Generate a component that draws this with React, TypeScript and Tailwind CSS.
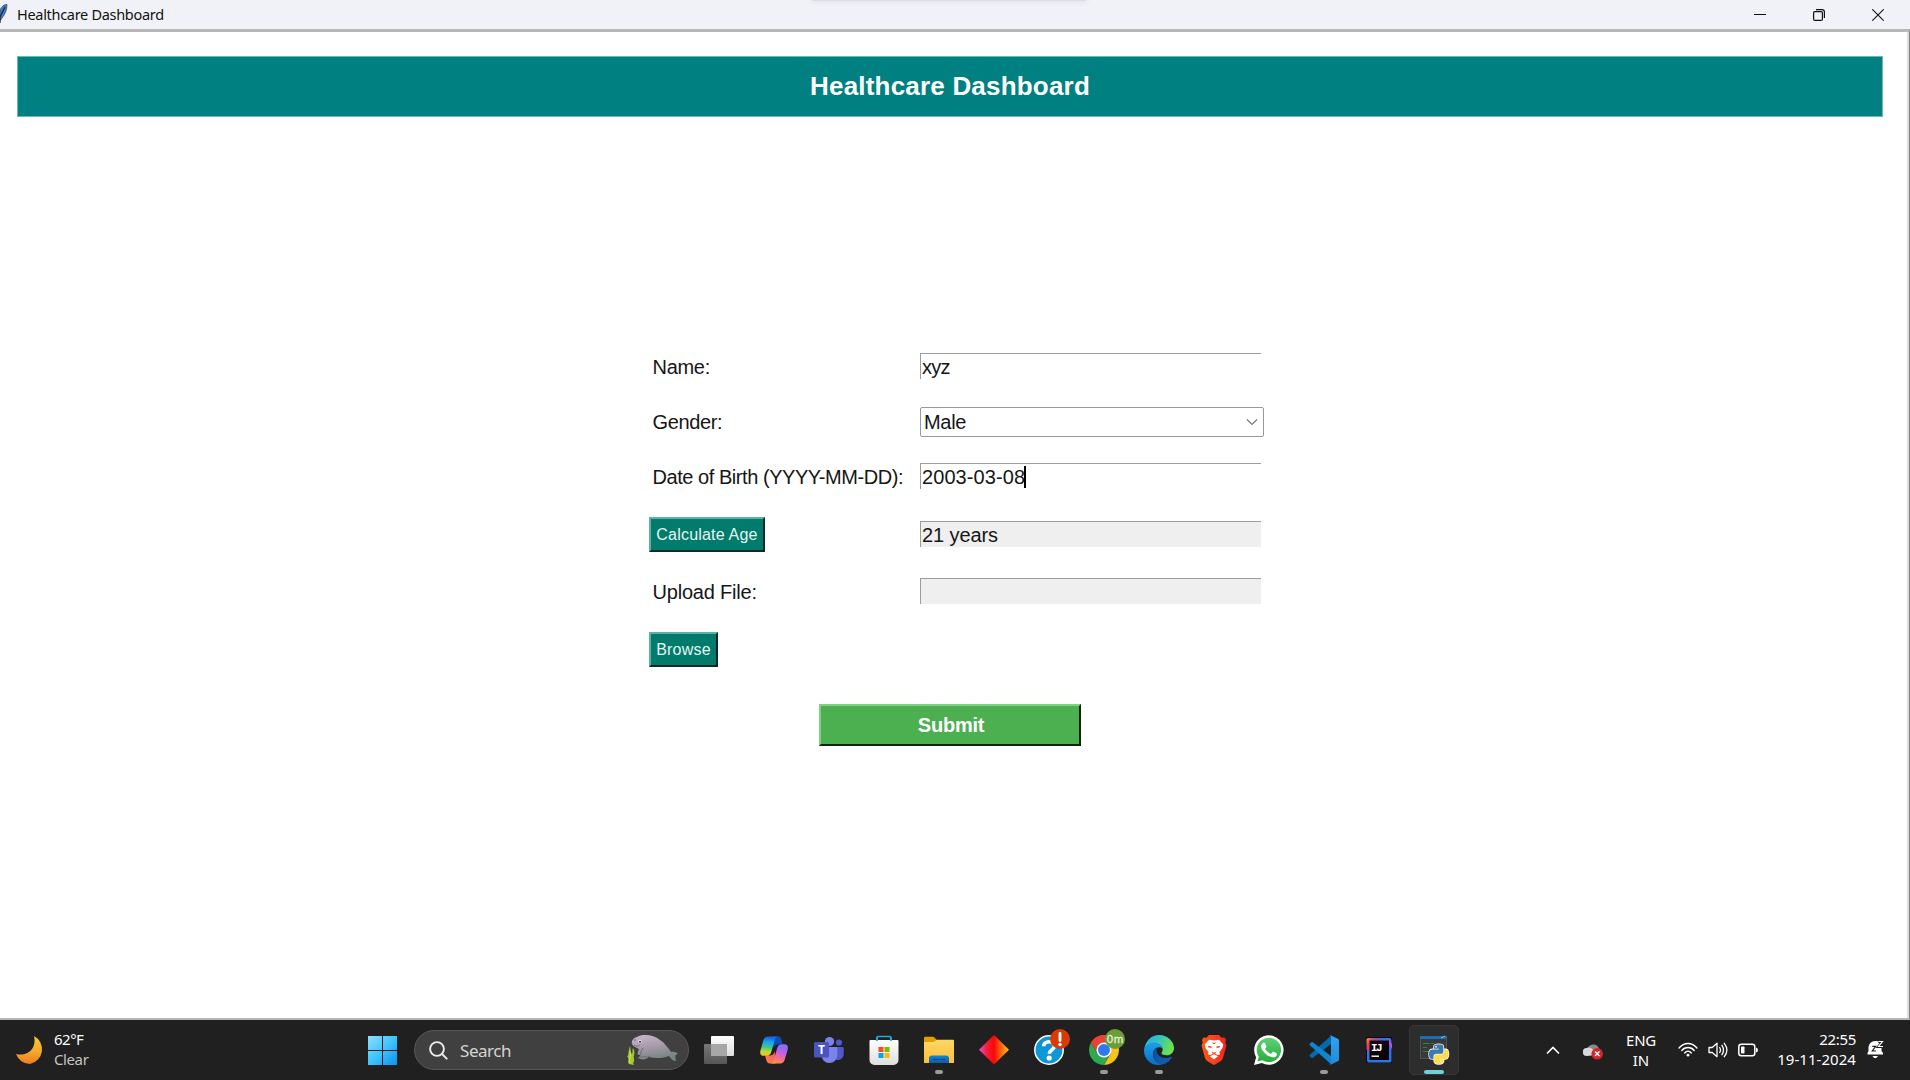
import type { ReactNode } from "react";

const PY_BLUE =
  "M167.8 248.1h106.8c29.7 0 53.4-24.5 53.4-54.3V91.9c0-29-24.4-50.7-53.4-55.6-35.8-5.9-74.7-5.6-106.8.1-45.2 8-53.4 24.7-53.4 55.6v40.7h106.9v13.6h-147c-31.1 0-58.3 18.7-66.8 54.2-9.8 40.7-10.2 66.1 0 108.6 7.6 31.6 25.7 54.2 56.8 54.2H101v-48.8c0-35.3 30.5-66.4 66.8-66.4zm-6.7-142.6c-11.1 0-20.1-9.1-20.1-20.3.1-11.3 9-20.4 20.1-20.4 11 0 20.1 9.2 20.1 20.4s-9 20.3-20.1 20.3z";
const PY_YELLOW =
  "M439.8 200.5c-7.7-30.9-22.3-54.2-53.4-54.2h-40.1v47.4c0 36.8-31.2 67.8-66.8 67.8H172.7c-29.2 0-53.4 25-53.4 54.3v101.8c0 29 25.2 46 53.4 54.3 33.8 9.9 66.3 11.7 106.8 0 26.9-7.8 53.4-23.5 53.4-54.3v-40.7H226.2v-13.6h160.2c31.1 0 42.6-21.7 53.4-54.2 11.2-33.5 10.7-65.7 0-108.6zM286.2 404c11.1 0 20.1 9.1 20.1 20.3 0 11.3-9 20.4-20.1 20.4-11 0-20.1-9.2-20.1-20.4.1-11.3 9.1-20.3 20.1-20.3z";
const PHONE =
  "M325.1 300.5c-5.5-2.8-32.8-16.2-37.9-18-5.1-1.9-8.8-2.8-12.5 2.8-3.7 5.6-14.3 18-17.6 21.8-3.2 3.7-6.5 4.2-12 1.4-32.6-16.3-54-29.1-75.5-66-5.7-9.8 5.7-9.1 16.3-30.3 1.8-3.7.9-6.9-.5-9.7-1.4-2.8-12.5-30.1-17.1-41.2-4.5-10.8-9.1-9.3-12.5-9.5-3.2-.2-6.9-.2-10.6-.2-3.7 0-9.7 1.4-14.8 6.9-5.1 5.6-19.4 19-19.4 46.3 0 27.3 19.9 53.7 22.6 57.4 2.8 3.7 39.1 59.7 94.8 83.8 35.2 15.2 49 16.5 66.6 13.9 10.7-1.6 32.8-13.4 37.4-26.4 4.6-13 4.6-24.1 3.2-26.4-1.3-2.5-5-3.9-10.5-6.6z";

function Grad({ id, stops, x1 = 0, y1 = 0, x2 = 0, y2 = 1 }: { id: string; stops: string[]; x1?: number; y1?: number; x2?: number; y2?: number }) {
  return (
    <linearGradient id={id} x1={x1} y1={y1} x2={x2} y2={y2}>
      {stops.map((c, i) => (
        <stop key={i} offset={i / (stops.length - 1)} stopColor={c} />
      ))}
    </linearGradient>
  );
}

function Icon({ children }: { children: ReactNode }) {
  return (
    <svg viewBox="0 0 30 30" className="block h-[30px] w-[30px] overflow-visible">
      {children}
    </svg>
  );
}

function Slot({ children, running = false }: { children: ReactNode; running?: boolean }) {
  return (
    <div className="relative flex h-full w-[55px] shrink-0 items-center justify-center">
      {children}
      {running && <span className="absolute bottom-[6px] left-[24px] h-1 w-2 rounded-full bg-[#9b9b9b]" />}
    </div>
  );
}

function TaskView() {
  return (
    <Icon>
      <defs>
        <Grad id="tv1" stops={["#ffffff", "#dcdcdc"]} />
        <Grad id="tv2" stops={["#777777", "#565656"]} />
      </defs>
      <rect x="7" y="1" width="23" height="20" rx="1" fill="url(#tv1)" />
      <rect x="0" y="9" width="23" height="20" rx="1" fill="url(#tv2)" />
      <rect x="7" y="9" width="16" height="12" fill="#a7a7a7" />
    </Icon>
  );
}

function Copilot() {
  return (
    <Icon>
      <defs>
        <Grad id="cp1" stops={["#1b62e8", "#18a9e8", "#3ec58f", "#c2d83a", "#ffc400"]} x2={-0.1} />
        <Grad id="cp2" stops={["#8f6cf5", "#c95fe0", "#f26a9b", "#ff8a4c", "#ffb347"]} x2={-0.3} />
        <Grad id="cp3" stops={["#0a56c4", "#0d43a8"]} x2={1} />
        <Grad id="cp4" stops={["#f24e6c", "#ff8b3d"]} x1={1} x2={0} />
      </defs>
      <path d="M14 1.500H19C21.500 1.500 22 3 22.700 5.200L23.700 9.500H19C16.500 9.500 15.500 11 15 13L12 3Z" fill="url(#cp3)" />
      <path d="M16 28.500H11C8.800 28.500 8 27 7.300 25L6 20.500H10.500C13.500 20.500 14.500 18.500 15.300 16L18 27Z" fill="url(#cp4)" />
      <path d="M8.500 1.500H18.500C16.500 2 16 4 15.300 6.500L12.300 17C11.500 20 9.500 20.800 7.500 20.800H5C1.500 20.800.5 18.500 1.600 15L4.500 5C5.200 2.700 6.500 1.500 8.500 1.500Z" fill="url(#cp1)" />
      <path d="M21.500 28.500H12C14 28 14.700 26 15.300 23.500L18.200 13C19 10.200 20.700 9.200 23 9.200H25.300C28.500 9.200 29.500 11.500 28.600 15L25.600 25C24.900 27.300 23.500 28.500 21.500 28.500Z" fill="url(#cp2)" />
      <path d="M16.300 10.500H18.700L14 19.500H12.500Z" fill="#202024" />
    </Icon>
  );
}

function Teams() {
  return (
    <Icon>
      <circle cx="15.500" cy="6.500" r="4.600" fill="#7b83eb" />
      <circle cx="25" cy="7.500" r="3.100" fill="#5059c9" />
      <path d="M19 12H28.500a1.200 1.200 0 0 1 1.200 1.200V19a6 6 0 0 1-10 4.500Z" fill="#5059c9" />
      <path d="M8 12H22a1.400 1.400 0 0 1 1.400 1.400V20a8 8 0 0 1-16 0Z" fill="#7b83eb" />
      <rect x="0" y="7" width="15" height="15.500" rx="1.500" fill="#4b53bc" />
      <text x="7.500" y="18.800" textAnchor="middle" fontSize="12" fontWeight="700" fill="#fff" fontFamily="Open Sans, sans-serif">T</text>
    </Icon>
  );
}

function Store() {
  return (
    <Icon>
      <defs><Grad id="st" stops={["#ffffff", "#dedede"]} /></defs>
      <path d="M8 7V2.300a.8.8 0 0 1 .8-.8H21a.8.8 0 0 1 .8.800V7" fill="none" stroke="#22a9e0" strokeWidth="1.700" />
      <path d="M.5 6A1 1 0 0 1 1.500 5H28.500A1 1 0 0 1 29.500 6V25A5 5 0 0 1 24.500 30H5.500A5 5 0 0 1 .5 25Z" fill="url(#st)" />
      <path d="M8 6V2.500M22 6V2.500" stroke="#22a9e0" strokeWidth="1.700" />
      <rect x="9.500" y="12" width="5" height="5" fill="#f25022" />
      <rect x="15.500" y="12" width="5" height="5" fill="#7fba00" />
      <rect x="9.500" y="18" width="5" height="5" fill="#00a4ef" />
      <rect x="15.500" y="18" width="5" height="5" fill="#ffb900" />
    </Icon>
  );
}

function Folder() {
  return (
    <Icon>
      <defs>
        <Grad id="fo1" stops={["#ffd768", "#fcc034"]} />
        <Grad id="fo2" stops={["#1285d8", "#0d5ca8"]} />
      </defs>
      <path d="M0 3A1.200 1.200 0 0 1 1.200 1.800H9.500L13 5V12H0Z" fill="#dfa000" />
      <path d="M0 7H9.500L13 4.800H29A1 1 0 0 1 30 5.800V28H0Z" fill="url(#fo1)" />
      <path d="M5 28V23.500A3 3 0 0 1 8 20.500H22A3 3 0 0 1 25 23.500V28Z" fill="url(#fo2)" />
      <path d="M9 24.500H21" stroke="#0a4a8a" strokeWidth="1.200" />
    </Icon>
  );
}

function Diamond() {
  return (
    <Icon>
      <defs><Grad id="di" stops={["#e550d8", "#f5203e", "#f90606", "#ff6a10", "#ffc400"]} x2={1} y2={0} /></defs>
      <path d="M15 0L30 14.700L15 29.400L0 14.700Z" fill="url(#di)" />
    </Icon>
  );
}

function Help() {
  return (
    <Icon>
      <circle cx="15" cy="15" r="14.200" fill="#0d96d8" stroke="#fff" strokeWidth="1.500" />
      <path d="M9.700 11.200C9.700 8.300 12 6.700 15 6.700C18.300 6.700 20.400 8.500 20.400 11C20.400 14.500 15.300 14.800 15.300 18.700" fill="none" stroke="#fff" strokeWidth="3.600" />
      <circle cx="15.200" cy="23" r="2.600" fill="#fff" />
      <circle cx="26" cy="4" r="10" fill="#d83b05" />
      <path d="M26-1.500V5.500" stroke="#fff" strokeWidth="2.800" strokeLinecap="round" />
      <circle cx="26" cy="9.500" r="1.700" fill="#fff" />
    </Icon>
  );
}

function Chrome() {
  return (
    <Icon>
      <path d="M15 15L2.010 7.500A15 15 0 0 1 27.990 7.500Z" fill="#ea4335" />
      <path d="M15 7.500H27.990A15 15 0 0 1 15 30L21.500 18.750Z" fill="#fbc116" />
      <path d="M2.010 7.500A15 15 0 0 0 15 30L21.500 18.750H8.500Z" fill="#2da94f" />
      <path d="M2.010 7.500L8.500 18.750L9 12L15 7.500H27.990A15 15 0 0 0 2.010 7.500Z" fill="#ea4335" />
      <circle cx="15" cy="15" r="7.500" fill="#fff" />
      <circle cx="15" cy="15" r="6" fill="#2f78ee" />
      <circle cx="26" cy="4" r="10" fill="#6a9c38" />
      <text x="26" y="8" textAnchor="middle" fontSize="11.500" fill="#e4f0d8" stroke="#e4f0d8" strokeWidth=".3" fontFamily="Liberation Sans, sans-serif" textLength="16.500">0m</text>
    </Icon>
  );
}

function Edge() {
  return (
    <Icon>
      <defs>
        <Grad id="ed1" stops={["#2aa9e8", "#33c5c0", "#6ae24c"]} x2={1} y2={0.4} />
        <Grad id="ed2" stops={["#1ba1e8", "#0c6cc8"]} />
        <Grad id="ed3" stops={["#0d4f9e", "#1260b8"]} x2={1} />
      </defs>
      <path d="M.3 14.500C1 6 7.500 0 15.200 0C24 0 30 6.800 30 13C30 17.500 26.700 20.300 22.800 20.300C19.500 20.300 17.500 19.300 17.500 18C17.500 17.200 18.700 16.700 18.700 14.500C18.700 11.500 15.500 8.700 11 8.700C6 8.700 1.500 11 .3 14.500Z" fill="url(#ed1)" />
      <path d="M0 14.700C1 10.500 5 7.500 10 7.500C14 7.500 17.500 9.500 18.500 13C13.500 10.500 9 14 9 19C9 24.500 13 29 19 29.300C8.500 32.500 0 25 0 15.500Z" fill="url(#ed2)" />
      <path d="M12.800 12.500C9.500 14.500 8.300 19 10 23C12 28 17 30 20 29C24 27.500 26.500 25 27.900 22.500C28.200 21.900 27.600 21.600 27 21.900C20 25 12.500 21 12.500 15.500C12.500 14 12.500 13.300 12.800 12.500Z" fill="url(#ed3)" />
    </Icon>
  );
}

function Brave() {
  return (
    <svg viewBox="0 0 26 30" className="h-[30px] w-[26px]">
      <defs><Grad id="br" stops={["#ff5a12", "#f9431b", "#fb1f1f"]} x2={1} y2={0} /></defs>
      <path d="M8 0H18L20.500 2.700L23.500 2.500L25 5L24.300 7.500L25.500 10.500L22 23C21.500 24.700 20.500 25.500 19 26.500L14 29.600C13.300 30.100 12.700 30.100 12 29.600L7 26.500C5.500 25.500 4.500 24.700 4 23L.5 10.500L1.700 7.500L1 5L2.500 2.500L5.500 2.700Z" fill="url(#br)" />
      <path d="M8 4.800L13 5.600L18 4.800L22.300 9.500L21.500 13L18.500 17L19 19.500L16.500 20L13 18L9.500 20L7 19.500L7.500 17L4.500 13L3.700 9.500Z" fill="#fff" />
      <path d="M9 21.200L13 19.300L17 21.200L13 24.500Z" fill="#fff" />
      <path d="M6.500 10.700L10.800 11.600L10.300 13L7.500 12.500ZM19.500 10.700L15.200 11.600L15.700 13L18.500 12.500Z" fill="#fb4a1e" />
      <path d="M10.300 16.500L13 17.800L15.700 16.500L14.500 18.400L13 19L11.500 18.400Z" fill="#fb4a1e" />
      <path d="M11 7.300L13 8L15 7.300L13.900 9H12.100Z" fill="#fb4a1e" />
    </svg>
  );
}

function WhatsApp() {
  return (
    <Icon>
      <defs><Grad id="wa" stops={["#5fd275", "#27ad3d"]} /></defs>
      <path d="M0 30L2.100 22.300A14.700 14.700 0 1 1 7.800 27.900Z" fill="#fff" />
      <path d="M3.500 26.500L4.800 21.700A12.200 12.200 0 1 1 8.400 25.200Z" fill="url(#wa)" />
      <path d={PHONE} fill="#fff" transform="translate(-.7 -3) scale(.0703)" />
    </Icon>
  );
}

function Code() {
  return (
    <Icon>
      <defs><Grad id="vs" stops={["#2ba4f0", "#2489db"]} /></defs>
      <path d="M.6 20L19 3.500L22 .5V9L4.200 22.500A1.500 1.500 0 0 1 2.200 22.500L.7 21.200A.9.9 0 0 1 .6 20Z" fill="#0569b0" />
      <path d="M.6 10L19 26.500L22 29.500V21L4.200 7.500A1.500 1.500 0 0 0 2.200 7.500L.7 8.800A.9.9 0 0 0 .6 10Z" fill="#0d86cf" />
      <path d="M22 29.600C21.300 29.900 20.500 29.700 20 29.200C20.800 29.900 22 29.300 22 28.200V1.800C22 .7 20.800.1 20 .8C20.500.3 21.300.1 22 .4L28.900 3.700C29.600 4 30 4.700 30 5.400V24.600C30 25.300 29.600 26 28.900 26.300Z" fill="url(#vs)" />
    </Icon>
  );
}

function IntelliJ() {
  return (
    <Icon>
      <defs>
        <Grad id="ij" stops={["#f9a03a", "#f0405a", "#c23a9c", "#3d6fe8"]} x2={0.9} y2={0.6} />
        <Grad id="ij2" stops={["#16060f", "#050309"]} />
      </defs>
      <rect x="2" y="2" width="26" height="26" fill="#08060c" />
      <path d="M4 3H26.500L27.500 5V26.500L26 27.500H4L3 26V4Z" fill="#2779ea" />
      <path d="M2.500 4L4 3L12 4L17 3L14 8L7 17L2.500 15Z" fill="url(#ij)" />
      <path d="M25 4L28 9V14L25 10Z" fill="#c04bd8" />
      <rect x="5.500" y="5.500" width="19.500" height="19.500" fill="url(#ij2)" />
      <text x="7" y="15.500" fontSize="11" fontWeight="700" fill="#fff" fontFamily="Liberation Mono, monospace" textLength="11.500">IJ</text>
      <rect x="7.500" y="20.500" width="7.500" height="1.400" fill="#fff" />
    </Icon>
  );
}

function PythonWindow() {
  return (
    <Icon>
      <rect x="1.500" y="1.500" width="26" height="22" fill="#38393a" stroke="#505254" />
      <rect x="1" y="1" width="27" height="3" fill="#1a6fae" />
      <path d="M22 3L26 1" stroke="#8cc4ea" />
      <path d="M4 8.500H10.500M12 8.500H15M4 12.500H8M4 16.500H10" stroke="#3d7d3b" strokeWidth="1.200" />
      <g transform="translate(10 8) scale(.0437)" stroke="#f3f3f3" strokeWidth="36">
        <path d={PY_BLUE} fill="#3d79aa" />
        <path d={PY_YELLOW} fill="#ffdc4e" />
      </g>
      <g transform="translate(10 8) scale(.0437)">
        <path d={PY_BLUE} fill="#3d79aa" />
        <path d={PY_YELLOW} fill="#ffdc4e" />
      </g>
    </Icon>
  );
}

function Manatee() {
  return (
    <svg viewBox="0 0 54 32" className="h-8 w-[54px] shrink-0">
      <defs>
        <Grad id="mn" stops={["#c9b8cc", "#a99bab", "#758581"]} x2={0.3} />
      </defs>
      <path d="M4 30C2 27 5 26 2 22C4 23 3 17 5 12C6 16 5 18 7 20C8 18 7 16 8 14C11 19 8 22 9 25C10 28 7 28 9 31Z" fill="#a5c92f" />
      <path d="M5 29C4 26 6 23 5 17" stroke="#d8e85c" strokeWidth="1" fill="none" />
      <path d="M7 10C6 7 8 4 12 3C18-.5 29 1 35 6C40 9 43 14 46 18C50 17 52 19 53 20C50 20 50 23 51 27C48 27 46 25 44 22C39 24 31 25 24 23C21 26 16 26 13 24C14 23 16 22 15 21C12 21 12 18 14 16C13 13 9 14 7 10Z" fill="url(#mn)" />
      <path d="M18 14C16 17 15 19 16 21M25 22C22 24 18 22 15 23" stroke="#706876" strokeWidth="1" fill="none" />
      <circle cx="15" cy="7.500" r="1.700" fill="#f5eef5" />
      <circle cx="15" cy="7.800" r="1" fill="#2a2530" />
      <circle cx="10" cy="6" r=".7" fill="#4a3f4d" />
      <path d="M9 11C11 13 14 12 15 11" stroke="#706876" fill="none" strokeWidth=".8" />
    </svg>
  );
}

function TitleBar() {
  return (
    <header className="relative flex h-[29px] shrink-0 items-center bg-[#f1f2f8]">
      <div className="absolute left-[812px] top-0 h-px w-[274px] bg-[#dcdde2] shadow-[0_0_5px_1px_#dcdde4]" />
      <svg viewBox="0 0 8 24" className="h-6 w-2">
        <path d="M0 7C2 3 4 1.500 7 1.500C7 6 5.500 11 2 15L0 18Z" fill="#3f7cc9" stroke="#4a4f5c" strokeWidth=".8" />
        <path d="M0 20V14L5 4" stroke="#1d2430" fill="none" strokeWidth="1.200" />
      </svg>
      <span className="ml-[9px] font-['Noto_Sans'] text-[14.500px] leading-none tracking-[-0.300px] text-[#111]">Healthcare Dashboard</span>
      <div className="ml-auto mr-[26px] flex items-center gap-[46px]">
        <svg viewBox="0 0 12 12" className="mr-px h-3 w-3"><path d="M0 5.500H12" stroke="#111" /></svg>
        <svg viewBox="0 0 12 12" className="mr-px h-3 w-3" fill="none" stroke="#111">
          <path d="M3 .7H9A2.400 2.400 0 0 1 11.400 3V9" strokeWidth="1.200" />
          <rect x=".6" y="2.600" width="8.800" height="8.800" rx="1.200" strokeWidth="1.200" />
        </svg>
        <svg viewBox="0 0 12 12" className="h-3 w-3"><path d="M.3.3L11.700 11.700M11.700.3L.3 11.700" stroke="#111" strokeWidth="1.100" /></svg>
      </div>
    </header>
  );
}

const field = "flex h-[26px] w-[341px] items-center border-l border-t border-[#9d9d9d] pl-px leading-none";
const label = "w-[271px] whitespace-nowrap pl-[3.500px] pt-[2px]";

function Form() {
  return (
    <section className="ml-[649px] mt-[222px] flex w-[620px] flex-col font-['Liberation_Sans'] text-[20px] text-[#161616]">
      <div className="flex h-[54px] items-center">
        <span className={`${label} tracking-[-0.300px]`}>Name:</span>
        <div className={`${field} bg-white`}><span className="pt-px tracking-[-0.700px]">xyz</span></div>
      </div>
      <div className="flex h-[58px] items-center">
        <span className="w-[271px] pl-[3.500px] tracking-[-0.350px]">Gender:</span>
        <div className="flex h-[30px] w-[344px] items-center justify-between rounded-[2px] border border-[#999] pl-[3px] pr-[5px] leading-none">
          <span className="tracking-[-0.300px]">Male</span>
          <svg viewBox="0 0 12 8" className="h-2 w-3"><path d="M1 1.500L6 6.500L11 1.500" stroke="#777" strokeWidth="1.200" fill="none" /></svg>
        </div>
      </div>
      <div className="flex h-[50px] items-center">
        <span className={`${label} tracking-[-0.450px]`}>Date of Birth (YYYY-MM-DD):</span>
        <div className={`${field} bg-white`}>
          <span className="tracking-[0.080px]">2003-03-08</span>
          <span className="-ml-px h-[22px] w-[2px] bg-black" />
        </div>
      </div>
      <div className="flex h-[66px] items-center">
        <div className="w-[271px]">
          <button className="flex h-[35px] w-[116px] items-center justify-center whitespace-nowrap border-2 border-b-[#0b2a26] border-l-[#5db0a3] border-r-[#0b2a26] border-t-[#5db0a3] bg-[#007b6c] pt-[2px] text-[16px] leading-none tracking-[0.200px] text-[#e6f4f1]">Calculate Age</button>
        </div>
        <div className={`${field} bg-[#efefef]`}><span className="tracking-[-0.100px]">21 years</span></div>
      </div>
      <div className="flex h-[48px] items-center">
        <span className={`${label} tracking-[-0.200px]`}>Upload File:</span>
        <div className={`${field} bg-[#efefef]`} />
      </div>
      <div className="flex h-[69px] items-center">
        <button className="flex h-[35px] w-[69px] items-center justify-center border-2 border-b-[#0b2a26] border-l-[#5db0a3] border-r-[#0b2a26] border-t-[#5db0a3] bg-[#007b6c] pt-px text-[16px] leading-none tracking-[0.200px] text-[#e6f4f1]">Browse</button>
      </div>
      <button className="ml-[170px] mt-[20px] flex h-[42px] w-[262px] items-center justify-center border-2 border-b-[#12240f] border-l-[#7fd083] border-r-[#12240f] border-t-[#7fd083] bg-[#4caf50] pl-[2px] font-bold leading-none tracking-[-0.250px] text-white">Submit</button>
    </section>
  );
}

function Tray() {
  return (
    <div className="ml-auto flex h-full items-center text-[15px] text-white">
      <svg viewBox="0 0 14 9" className="mr-[23px] h-[9px] w-[14px]"><path d="M1 7.500L7 1.500L13 7.500" stroke="#fff" strokeWidth="1.600" fill="none" /></svg>
      <svg viewBox="0 0 20 18" className="mr-[23px] mt-px h-[18px] w-5">
        <path d="M4 8C5 2 14 0 16 7L17 12H5Z" fill="#8a8a8a" />
        <path d="M4 14A4 4 0 0 1 3.500 6C6 4.500 9 6 10 8L13 13Z" fill="#d8d8d8" />
        <circle cx="14.200" cy="11.800" r="5.800" fill="#d6252e" />
        <path d="M12 9.600L16.400 14M16.400 9.600L12 14" stroke="#fff" strokeWidth="1.400" />
      </svg>
      <div className="mr-[22px] flex w-[30px] flex-col items-center whitespace-nowrap leading-5">
        <span className="tracking-[-0.300px]">ENG</span><span>IN</span>
      </div>
      <svg viewBox="0 0 20 16" className="mr-[10px] h-4 w-5" fill="none" stroke="#fff" strokeWidth="1.400" strokeLinecap="round">
        <path d="M1 6C6 0 14 0 19 6M3.800 8.500C7 4.500 13 4.500 16.200 8.500M6.700 11C8.500 8.500 11.500 8.500 13.300 11" />
        <circle cx="10" cy="13.200" r="1.400" fill="#fff" stroke="none" />
      </svg>
      <svg viewBox="0 0 20 18" className="mr-[10px] h-[18px] w-5" fill="none" stroke="#fff" strokeWidth="1.300" strokeLinecap="round" strokeLinejoin="round">
        <path d="M1 6.500H4.200L9 2.300V15.700L4.200 11.500H1ZM11.700 6.500Q13.300 9 11.700 11.500M14 4.300Q17 9 14 13.700M16.300 2.300Q21.500 9 16.300 15.700" />
      </svg>
      <svg viewBox="0 0 20 14" className="mr-[20px] h-[14px] w-5">
        <rect x=".8" y="1.300" width="16" height="11.400" rx="2.500" fill="none" stroke="#fff" strokeWidth="1.500" />
        <rect x="3" y="3.500" width="3.500" height="7" rx=".7" fill="#fff" />
        <path d="M18 4.500Q20 5 20 7Q20 9 18 9.500Z" fill="#fff" />
      </svg>
      <div className="flex w-[78px] flex-col items-end whitespace-nowrap pb-[2px] leading-5">
        <span className="tracking-[-0.300px]">22:55</span><span className="tracking-[0.050px]">19-11-2024</span>
      </div>
      <svg viewBox="0 0 20 20" className="ml-[10px] mr-[24px] h-5 w-5">
        <path d="M1.500 14.500V13L2.500 11V7A6.500 6.500 0 0 1 9 1H11A6.500 6.500 0 0 1 15.500 7V11L17 13V14.500Z" fill="#fff" />
        <path d="M6.500 16H12Q9.200 20.500 6.500 16Z" fill="#fff" />
        <path d="M6.300 6.300H9.700L6.300 11H10" stroke="#1e1e1e" strokeWidth="1.200" fill="none" />
        <path d="M12.200 1.500H16.500L12.500 6.500H17" stroke="#202020" strokeWidth="2.800" fill="none" />
        <path d="M12.200 1.500H16.500L12.500 6.500H17" stroke="#fff" strokeWidth="1.200" fill="none" />
      </svg>
    </div>
  );
}

function Taskbar() {
  return (
    <footer className="flex h-[60px] shrink-0 items-center bg-[#202020] font-['Noto_Sans']">
      <svg viewBox="0 0 28 28" className="ml-4 h-7 w-7">
        <defs><Grad id="moon" stops={["#f7c83a", "#f5ad2e", "#ee7d22"]} /></defs>
        <path d="M18 0A15 15 0 0 1 14 28A15 15 0 0 1 0 18C12 21 21 12 18 0Z" fill="url(#moon)" />
      </svg>
      <div className="ml-[10px] flex w-[80px] flex-col pb-[2px] text-[15px] leading-5">
        <span className="tracking-[-0.500px] text-white">62°F</span><span className="tracking-[-0.400px] text-[#c4c4c4]">Clear</span>
      </div>
      <svg viewBox="0 0 29 29" className="ml-[234px] h-[29px] w-[29px]">
        <defs><Grad id="win" stops={["#8be0ff", "#3ec4fb", "#0a93f5"]} x2={1} /></defs>
        <path d="M0 0H14V14H0ZM15 0H29V14H15ZM0 15H14V29H0ZM15 15H29V29H15Z" fill="url(#win)" />
      </svg>
      <div className="ml-[17px] flex h-10 w-[275px] items-center rounded-full border border-[#575757] bg-[#404040] pl-[14px] pr-[9px]">
        <svg viewBox="0 0 19 19" className="h-[19px] w-[19px]" fill="none" stroke="#ececec" strokeWidth="1.900" strokeLinecap="round">
          <circle cx="8" cy="8" r="6.900" /><path d="M13 13L17.700 17.700" />
        </svg>
        <span className="ml-[12px] mr-auto pt-px text-[17px] tracking-[-0.450px] text-[#d4d4d4]">Search</span>
        <Manatee />
      </div>
      <div className="ml-[2px] flex h-full">
        <Slot><TaskView /></Slot>
        <Slot><Copilot /></Slot>
        <Slot><Teams /></Slot>
        <Slot><Store /></Slot>
        <Slot running><Folder /></Slot>
        <Slot><Diamond /></Slot>
        <Slot><Help /></Slot>
        <Slot running><Chrome /></Slot>
        <Slot running><Edge /></Slot>
        <Slot><Brave /></Slot>
        <Slot><WhatsApp /></Slot>
        <Slot running><Code /></Slot>
        <Slot><IntelliJ /></Slot>
        <Slot>
          <div className="relative flex h-[50px] w-[50px] items-center justify-center rounded-[5px] border border-[#373737] bg-[#2d2d2d]">
            <PythonWindow />
            <span className="absolute bottom-0 left-[14px] h-1 w-5 rounded-full bg-[#6fd0d8]" />
          </div>
        </Slot>
      </div>
      <Tray />
    </footer>
  );
}

export default function App() {
  return (
    <div className="flex h-[1080px] w-[1910px] flex-col overflow-hidden bg-white">
      <TitleBar />
      <main className="flex min-h-0 flex-1 flex-col border-b-2 border-r border-t-[3px] border-b-[#b5b5b5] border-r-[#858585] border-t-[#b8b8b8] bg-white">
        <div className="flex min-h-0 flex-1 flex-col border-r-2 border-[#dedede]">
          <h1 className="ml-[17px] mr-[24px] mt-[24px] flex h-[61px] shrink-0 items-center justify-center border border-[#6fb7b7] bg-[#008080] pb-[2px] font-['Liberation_Sans'] text-[26px] font-bold leading-none tracking-[0.200px] text-white">
            Healthcare Dashboard
          </h1>
          <Form />
        </div>
      </main>
      <Taskbar />
    </div>
  );
}
